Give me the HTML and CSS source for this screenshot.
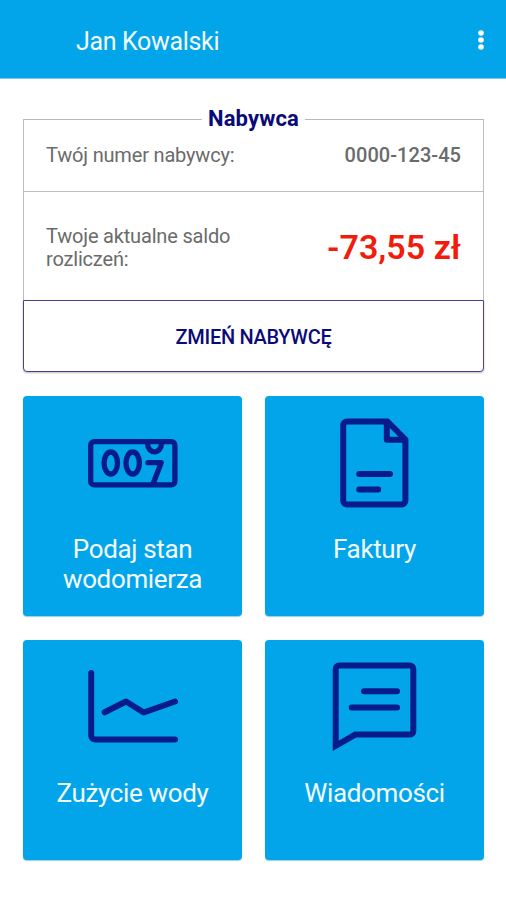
FILE: index.html
```html
<!DOCTYPE html>
<html lang="pl">
<head>
<meta charset="utf-8">
<title>Jan Kowalski</title>
<link rel="stylesheet" href="styles.css">
</head>
<body>
<header class="bar">
  <h1 class="bar-title">Jan Kowalski</h1>
  <svg class="more" viewBox="0 0 8 20"><circle cx="4" cy="3" r="2.8"/><circle cx="4" cy="10" r="2.8"/><circle cx="4" cy="17" r="2.8"/></svg>
</header>
<main class="content">
  <section class="account">
    <div class="legend"><h2 class="legend-text">Nabywca</h2></div>
    <div class="row row-number"><span>Twój numer nabywcy:</span><strong class="number">0000-123-45</strong></div>
    <div class="row row-balance"><span>Twoje aktualne saldo<br>rozliczeń:</span><strong class="balance">-73,55 zł</strong></div>
    <button class="change"><span class="change-text">ZMIEŃ NABYWCĘ</span></button>
  </section>
  <nav class="tiles">
    <a class="tile">
      <svg class="icon" viewBox="83 413 100 100"><rect x="90.7" y="441.7" width="84.2" height="43.2" rx="3.5"/><ellipse cx="110.8" cy="463" rx="6.7" ry="11"/><ellipse cx="132.7" cy="463" rx="6.7" ry="11"/><path d="M147.7 442v2.5a6.8 7.3 0 0 0 13.6 0V442M148 462.7h13.2L153 484"/></svg>
      <span class="label">Podaj stan<br>wodomierza</span>
    </a>
    <a class="tile">
      <svg class="icon icon-bold" viewBox="325 413 100 100"><path d="M387.5 421.5H347a3.8 3.8 0 0 0-3.8 3.8v75.4a3.8 3.8 0 0 0 3.8 3.8h54.6a3.8 3.8 0 0 0 3.8-3.8v-61.2zM386.8 421.5v18.3h18.4M359.2 474h30.8M359.2 489.6h19"/></svg>
      <span class="label">Faktury</span>
    </a>
    <a class="tile">
      <svg class="icon icon-bold" viewBox="83 657 100 100"><path d="M91.2 673v62.5a4 4 0 0 0 4 4H175M104.7 712.3l21.3-10.8 17.7 11 31.3-11"/></svg>
      <span class="label">Zużycie wody</span>
    </a>
    <a class="tile">
      <svg class="icon icon-bold icon-message" viewBox="325 657 100 100"><path d="M335.7 745.8V669a3.6 3.6 0 0 1 3.6-3.6h70.4a3.6 3.6 0 0 1 3.6 3.6v62a3.6 3.6 0 0 1-3.6 3.6H355.3zM364 691.2h33M351.7 707.4H397"/></svg>
      <span class="label">Wiadomości</span>
    </a>
  </nav>
</main>
</body>
</html>
```

FILE: styles.css
```css
* {
  box-sizing: border-box;
}

body {
  margin: 0;
  min-height: 900px;
  background: #fefffe;
  font-family: Roboto, sans-serif;
  color: #6b6b6b;
}

.bar {
  display: flex;
  align-items: center;
  justify-content: space-between;
  height: 79px;
  padding: 4px 21px 0 76px;
  background: #03a5ea;
  border-bottom: 1px solid #78c8f3;
  color: #f3fbff;
}

.bar-title {
  margin: 0;
  padding-top: 2px;
  font-size: 25px;
  line-height: 30px;
  font-weight: 400;
  letter-spacing: -0.33px;
}

.more {
  width: 8px;
  height: 20px;
  margin-top: -2px;
  fill: #fff;
}

.content {
  padding: 27px 22px 0 23px;
}

.account {
  height: 266px;
}

.legend {
  display: flex;
  align-items: center;
  height: 26px;
  margin-bottom: -13px;
  gap: 6px;
}

.legend::before,
.legend::after {
  content: "";
  flex: 1;
  height: 1px;
  background: #b9b9b9;
}

.legend-text {
  margin: 0;
  font-size: 22px;
  line-height: 22px;
  font-weight: 700;
  letter-spacing: 0.15px;
  color: #0a0a78;
}

.row {
  display: flex;
  align-items: center;
  justify-content: space-between;
  padding: 0 22px;
  border: 1px solid #bebebe;
  border-top: 0;
  font-size: 20px;
  line-height: 23px;
  letter-spacing: -0.18px;
}

.row-number {
  height: 73px;
}

.row-balance {
  height: 108px;
  border-bottom: 0;
  padding-top: 4px;
}

.number {
  font-weight: 500;
  letter-spacing: 0.05px;
}

.balance {
  margin-top: -2px;
  font-size: 34px;
  line-height: 38px;
  font-weight: 600;
  letter-spacing: 0;
  color: #f01c0c;
}

.change {
  display: block;
  width: 100%;
  height: 72px;
  padding: 2px 0 0;
  border: 1px solid #44448f;
  border-radius: 0 0 4px 4px;
  background: #fefffe;
  box-shadow: 0 1px 2px #bbb;
  font: 500 20px/24px Roboto, sans-serif;
  letter-spacing: -0.3px;
  color: #0a0a78;
}

.tiles {
  display: grid;
  grid-template-columns: 219px 219px;
  grid-auto-rows: 220px;
  gap: 24px 23px;
  margin-top: 24px;
}

.tile {
  display: flex;
  flex-direction: column;
  align-items: center;
  gap: 21px;
  padding-top: 17px;
  border-radius: 4px;
  background: #03a5ea;
  box-shadow: 0 1px 1px #9fcbe0;
  color: #f3fbff;
}

.icon {
  width: 100px;
  height: 100px;
  fill: none;
  stroke: #071b8b;
  stroke-width: 5.3;
  stroke-linecap: round;
  stroke-linejoin: round;
}

.icon-bold {
  stroke-width: 6;
}

.icon-message {
  stroke-linejoin: miter;
}

.label {
  font-size: 26px;
  line-height: 30px;
  letter-spacing: -0.35px;
  text-align: center;
}
```
